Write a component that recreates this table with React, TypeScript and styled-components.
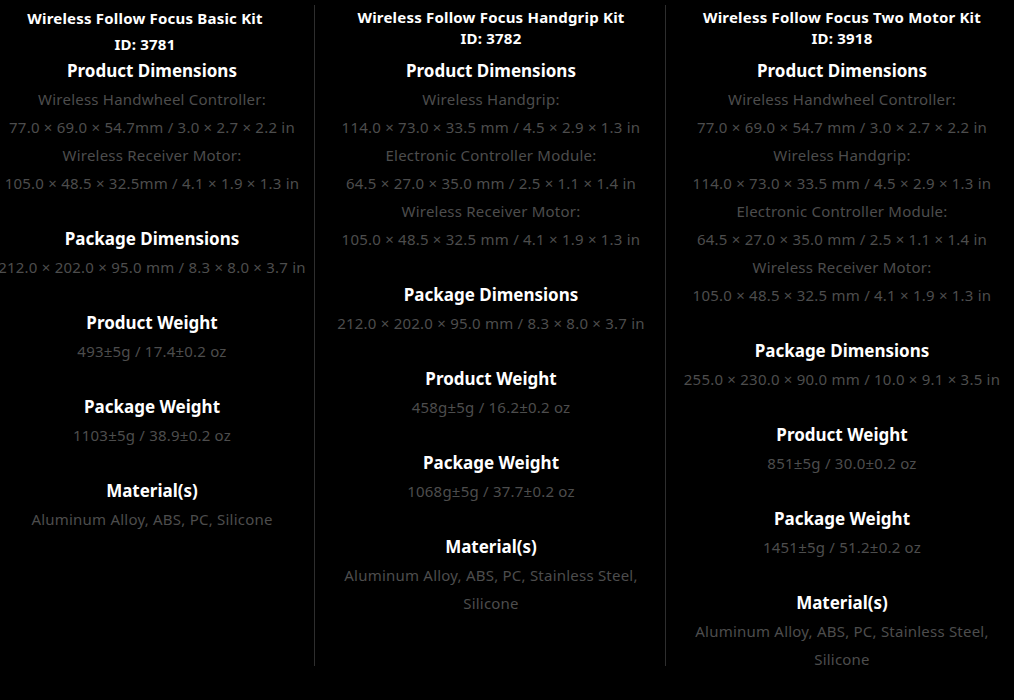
import React from "react";
import styled, { createGlobalStyle } from "styled-components";

const Global = createGlobalStyle`
  html, body { margin: 0; padding: 0; background: #000; }
  body { font-family: "Noto Sans", "Open Sans", sans-serif; overflow: hidden; }
`;

const Grid = styled.div`
  display: grid;
  grid-template-columns: 314px 351px 1fr;
  height: 661px;
  margin-top: 5px;
  width: 1014px;
`;

const Column = styled.div<{ $divider?: boolean; $padL?: number; $padR?: number }>`
  display: flex;
  flex-direction: column;
  align-items: center;
  border-left: ${(p) => (p.$divider ? "1px solid #2e2e2e" : "none")};
  padding-left: ${(p) => p.$padL ?? 0}px;
  padding-right: ${(p) => p.$padR ?? 0}px;
  min-width: 0;
`;

const Header = styled.div<{ $lh: number; $pad: number; $shift: number }>`
  height: 52px;
  box-sizing: border-box;
  padding-top: ${(p) => p.$pad}px;
  margin-right: ${(p) => p.$shift}px;
  display: flex;
  flex-direction: column;
  align-items: center;
  color: #fff;
  font-weight: 700;
  font-size: 15px;
  letter-spacing: 0.2px;
  line-height: ${(p) => p.$lh}px;
  white-space: nowrap;
`;

const Section = styled.div`
  display: flex;
  flex-direction: column;
  align-items: center;
  & + & { margin-top: 28px; }
`;

const Heading = styled.div`
  color: #fff;
  font-weight: 700;
  font-size: 17px;
  line-height: 28px;
  white-space: nowrap;
`;

const Value = styled.div`
  color: #4d4d4d;
  font-size: 15px;
  letter-spacing: 0.22px;
  line-height: 28px;
  white-space: nowrap;
`;

type Kit = {
  title: string;
  id: string;
  lh: number;
  pad: number;
  shift: number;
  sections: { h: string; v: string[] }[];
};

const kits: Kit[] = [
  {
    title: "Wireless Follow Focus Basic Kit",
    id: "ID: 3781",
    lh: 26,
    pad: 0,
    shift: 14,
    sections: [
      {
        h: "Product Dimensions",
        v: [
          "Wireless Handwheel Controller:",
          "77.0 × 69.0 × 54.7mm / 3.0 × 2.7 × 2.2 in",
          "Wireless Receiver Motor:",
          "105.0 × 48.5 × 32.5mm / 4.1 × 1.9 × 1.3 in",
        ],
      },
      { h: "Package Dimensions", v: ["212.0 × 202.0 × 95.0 mm / 8.3 × 8.0 × 3.7 in"] },
      { h: "Product Weight", v: ["493±5g / 17.4±0.2 oz"] },
      { h: "Package Weight", v: ["1103±5g / 38.9±0.2 oz"] },
      { h: "Material(s)", v: ["Aluminum Alloy, ABS, PC, Silicone"] },
    ],
  },
  {
    title: "Wireless Follow Focus Handgrip Kit",
    id: "ID: 3782",
    lh: 21,
    pad: 2,
    shift: 0,
    sections: [
      {
        h: "Product Dimensions",
        v: [
          "Wireless Handgrip:",
          "114.0 × 73.0 × 33.5 mm / 4.5 × 2.9 × 1.3 in",
          "Electronic Controller Module:",
          "64.5 × 27.0 × 35.0 mm / 2.5 × 1.1 × 1.4 in",
          "Wireless Receiver Motor:",
          "105.0 × 48.5 × 32.5 mm / 4.1 × 1.9 × 1.3 in",
        ],
      },
      { h: "Package Dimensions", v: ["212.0 × 202.0 × 95.0 mm / 8.3 × 8.0 × 3.7 in"] },
      { h: "Product Weight", v: ["458g±5g / 16.2±0.2 oz"] },
      { h: "Package Weight", v: ["1068g±5g / 37.7±0.2 oz"] },
      { h: "Material(s)", v: ["Aluminum Alloy, ABS, PC, Stainless Steel,", "Silicone"] },
    ],
  },
  {
    title: "Wireless Follow Focus Two Motor Kit",
    id: "ID: 3918",
    lh: 21,
    pad: 2,
    shift: 0,
    sections: [
      {
        h: "Product Dimensions",
        v: [
          "Wireless Handwheel Controller:",
          "77.0 × 69.0 × 54.7 mm / 3.0 × 2.7 × 2.2 in",
          "Wireless Handgrip:",
          "114.0 × 73.0 × 33.5 mm / 4.5 × 2.9 × 1.3 in",
          "Electronic Controller Module:",
          "64.5 × 27.0 × 35.0 mm / 2.5 × 1.1 × 1.4 in",
          "Wireless Receiver Motor:",
          "105.0 × 48.5 × 32.5 mm / 4.1 × 1.9 × 1.3 in",
        ],
      },
      { h: "Package Dimensions", v: ["255.0 × 230.0 × 90.0 mm / 10.0 × 9.1 × 3.5 in"] },
      { h: "Product Weight", v: ["851±5g / 30.0±0.2 oz"] },
      { h: "Package Weight", v: ["1451±5g / 51.2±0.2 oz"] },
      { h: "Material(s)", v: ["Aluminum Alloy, ABS, PC, Stainless Steel,", "Silicone"] },
    ],
  },
];

const pads = [
  { l: 0, r: 10 },
  { l: 2, r: 0 },
  { l: 4, r: 0 },
];

export default function App() {
  return (
    <>
      <Global />
      <Grid>
        {kits.map((k, i) => (
          <Column key={k.id} $divider={i > 0} $padL={pads[i].l} $padR={pads[i].r}>
            <Header $lh={k.lh} $pad={k.pad} $shift={k.shift}>
              <span>{k.title}</span>
              <span>{k.id}</span>
            </Header>
            {k.sections.map((s) => (
              <Section key={s.h}>
                <Heading>{s.h}</Heading>
                {s.v.map((v) => (
                  <Value key={v}>{v}</Value>
                ))}
              </Section>
            ))}
          </Column>
        ))}
      </Grid>
    </>
  );
}
